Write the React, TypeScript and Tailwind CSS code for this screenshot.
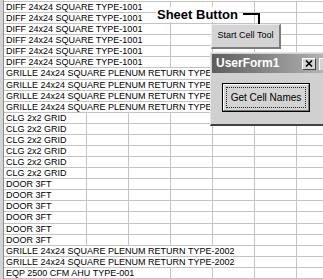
import React from 'react';

type Row = { text: string; span: number };

const fill = (n: number, text: string, span: number): Row[] => Array.from({ length: n }, () => ({ text, span }));

const rows: Row[] = [
  ...fill(6, 'DIFF 24x24 SQUARE TYPE-1001', 3),
  ...fill(4, 'GRILLE 24x24 SQUARE PLENUM RETURN TYPE-2002', 5),
  ...fill(6, 'CLG 2x2 GRID', 1),
  ...fill(6, 'DOOR 3FT', 1),
  ...fill(2, 'GRILLE 24x24 SQUARE PLENUM RETURN TYPE-2002', 5),
  { text: 'EQP 2500 CFM AHU TYPE-001', span: 3 },
  { text: '', span: 1 },
];

const TOTAL_COLS = 7;

// text overflowing into empty cells hides the grid lines under it, so the first cell spans
const SheetRow: React.FC<{ row: Row }> = ({ row }) => {
  const rest = TOTAL_COLS - row.span;
  return (
    <div className="flex h-[11.08px] border-b border-[#c4c4c4]">
      <div
        className="h-full shrink-0 border-r border-[#c4c4c4] pl-[2px] whitespace-nowrap leading-[10.5px]"
        style={{ width: 83 + 42 * (row.span - 1) }}
      >
        {row.text}
      </div>
      {Array.from({ length: rest }).map((_, i) => (
        <div key={i} className="h-full w-[42px] shrink-0 border-r border-[#c4c4c4]" />
      ))}
    </div>
  );
};

export default function App() {
  return (
    <div className="relative h-[279px] w-[323px] overflow-hidden bg-white font-['Liberation_Sans',Arial,sans-serif] text-[9px] text-black">
      <div className="flex h-full">
        <div className="h-full w-[4px] shrink-0 border-r border-[#8c8c8c] bg-[#d4d4d4]" />
        <div className="mt-px border-t border-[#c4c4c4]">
          {rows.map((r, i) => (
            <SheetRow key={i} row={r} />
          ))}
        </div>
      </div>

      {/* label + arrow pointing at the sheet button */}
      <div className="absolute left-[156px] top-[7px] flex items-start">
        <div className="bg-white px-px text-[13px] font-bold leading-[15px]">Sheet Button</div>
        <div className="ml-[4px] mt-[6px] h-[2px] w-[15px] bg-black" />
      </div>
      <div className="absolute left-[258px] top-[13px] h-[11px] w-[2px] bg-black" />

      <div className="absolute left-[211px] top-[24px] flex h-[25px] w-[70px] items-center justify-center border-t border-l border-t-[#eeeeee] border-l-[#eeeeee] border-r-2 border-b-2 border-r-[#7c7c7c] border-b-[#7c7c7c] bg-[#d4d4d4] text-[9px]">
        Start Cell Tool
      </div>

      {/* UserForm1 window */}
      <div className="absolute left-[210px] top-[52px] flex h-[74px] w-[124px] flex-col border-t border-l border-b-2 border-t-[#e6e6e6] border-l-[#e6e6e6] border-b-[#404040] bg-[#d0d0d0]">
        <div className="ml-px mt-px flex h-[19px] items-center bg-gradient-to-r from-[#5e5e5e] to-[#bcbcbc] pl-[4px] pr-px">
          <span className="text-[12px] font-bold leading-[15px] text-white">UserForm1</span>
          <div className="ml-auto flex gap-[3px]">
            <div className="flex h-[12px] w-[14px] items-center justify-center border border-t-white border-l-white border-r-[#404040] border-b-[#404040] bg-[#d4d4d4]">
              <svg width="8" height="7" viewBox="0 0 8 7">
                <path d="M1 0.5 L7 6.5 M7 0.5 L1 6.5" stroke="#000" strokeWidth="1.6" />
              </svg>
            </div>
            <div className="h-[12px] w-[14px] border-t border-l border-t-white border-l-white bg-[#d4d4d4]" />
          </div>
        </div>
        <div className="pl-[11px] pt-[10px]">
          <div className="h-[29px] w-[88px] border border-black">
            <div className="h-full w-full border border-t-white border-l-white border-r-[#7c7c7c] border-b-[#7c7c7c] bg-[#d4d4d4] p-[2px]">
              <div className="flex h-full w-full items-center justify-center border border-dotted border-[#222] text-[10px]">
                Get Cell Names
              </div>
            </div>
          </div>
        </div>
      </div>
    </div>
  );
}
